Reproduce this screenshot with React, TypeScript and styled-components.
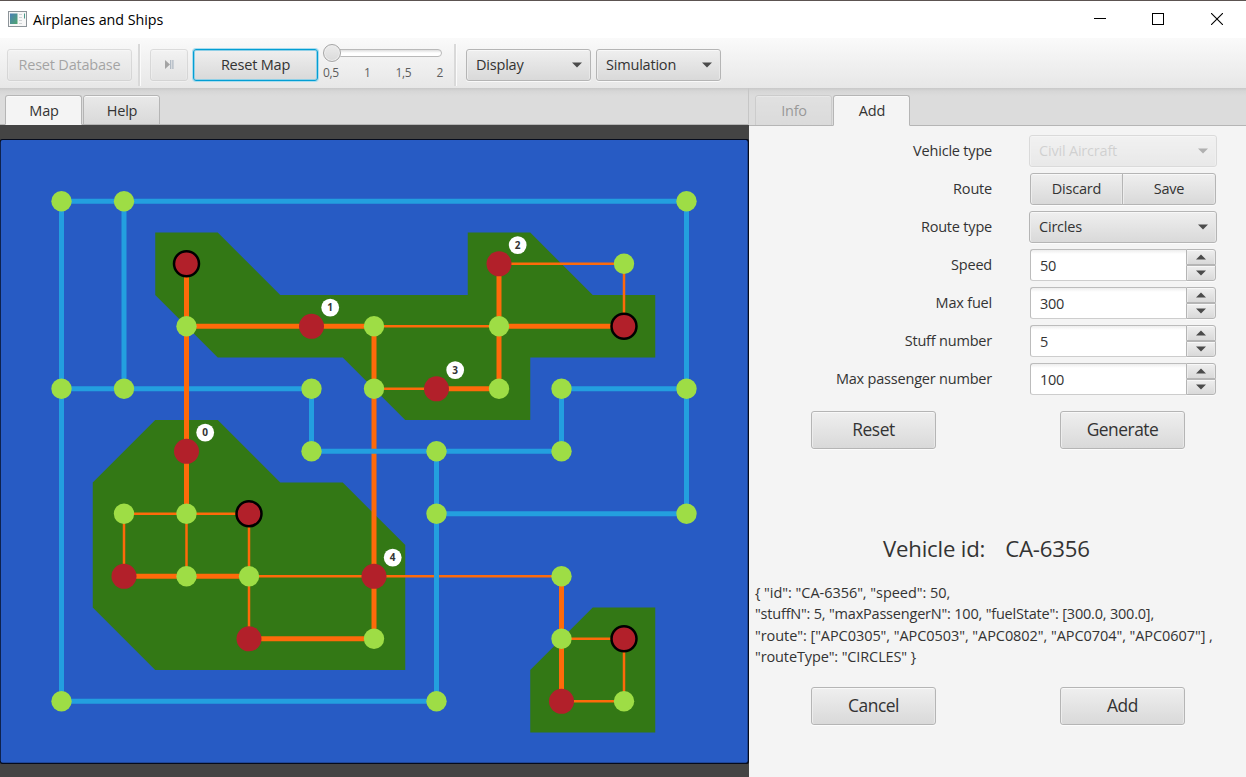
import React from "react";
import styled, { createGlobalStyle, css } from "styled-components";

const GlobalStyle = createGlobalStyle`
  * { box-sizing: border-box; }
  body { margin: 0; background: #f4f4f4; overflow: hidden; }
`;

const Window = styled.div`
  display: flex;
  flex-direction: column;
  width: 1246px;
  height: 777px;
  background: #f4f4f4;
  color: #333;
  font-family: "Open Sans", "Noto Sans", sans-serif;
  font-size: 14.5px;
  letter-spacing: -0.2px;
  white-space: pre;
`;

const TitleBar = styled.header`
  display: flex;
  align-items: center;
  height: 38px;
  flex: none;
  border-top: 1px solid #5c5451;
  background: #fff;
  color: #000;
  padding: 0 0 1px 8px;
`;

const Title = styled.span`
  margin-left: 6px;
  flex: 1;
  font-size: 14.3px;
  letter-spacing: -0.04px;
`;

const WindowButton = styled.span`
  display: flex;
  justify-content: center;
  align-items: center;
  width: 58.5px;
  height: 36px;
`;

const Toolbar = styled.div`
  display: flex;
  height: 50px;
  flex: none;
  padding: 11px 7px 7px;
  background: linear-gradient(#fafafa, #e7e7e7);
`;

const raised = css`
  border: 1px solid #b5b5b5;
  border-radius: 3px;
  background: linear-gradient(#efefef, #d9d9d9);
  box-shadow: inset 0 1px 0 #f8f8f8, inset 1px 0 0 #ededed, inset -1px 0 0 #e8e8e8, 0 1px 0 rgba(255, 255, 255, 0.7);
`;

const Button = styled.div<{ $w: number; $big?: boolean; $focus?: boolean; $off?: boolean; $mr?: number }>`
  ${raised}
  display: flex;
  align-items: center;
  justify-content: center;
  flex: none;
  width: ${(p) => p.$w}px;
  height: ${(p) => (p.$big ? 38 : 32)}px;
  margin-right: ${(p) => p.$mr || 0}px;
  padding-bottom: ${(p) => (p.$off ? 1 : 2)}px;
  ${(p) => p.$big && css`font-size: 17.4px; letter-spacing: -0.5px;`}
  ${(p) => p.$focus && css`
    border-color: #039ed3;
    box-shadow: 0 0 0 1px #a8dcee, inset 0 0 0 1px #8fcfe6;
  `}
  ${(p) => p.$off && css`opacity: 0.4;`}
`;

const Separator = styled.i<{ $l: number; $r: number }>`
  width: 3px;
  height: 42px;
  flex: none;
  margin: -5px ${(p) => p.$r}px 0 ${(p) => p.$l}px;
  border-left: 2px solid #d9d9d9;
  border-right: 1px solid #fbfbfb;
`;

const SpeedSlider = styled.div`
  width: 120px;
  margin: -6px 0 0 5px;
  flex: none;
`;

const Track = styled.div`
  display: flex;
  align-items: center;
  height: 8px;
  margin: 6px 0 0 2px;
  width: 117px;
  border: 1px solid #b9b9b9;
  border-radius: 4px;
  background: linear-gradient(#dedede, #fff 50%);
`;

const Thumb = styled.i`
  width: 18px;
  height: 18px;
  flex: none;
  margin-left: -3px;
  border: 1px solid #a5a5a5;
  border-radius: 50%;
  background: linear-gradient(#ececec, #dadada);
  box-shadow: inset 0 0 0 1px #eee, 0 1px 0 #f6f6f6;
`;

const Ticks = styled.div`
  display: flex;
  justify-content: space-between;
  margin-top: 7px;
  color: #5e5e5e;
  font-size: 12px;
  line-height: 17px;
  letter-spacing: -0.4px;
`;

const Select = styled.div<{ $w: number; $off?: boolean; $mr?: number }>`
  ${raised}
  display: flex;
  align-items: center;
  flex: none;
  justify-content: space-between;
  width: ${(p) => p.$w}px;
  height: 32px;
  margin-right: ${(p) => p.$mr || 0}px;
  padding: 0 8px 0 9px;
  span { padding-bottom: 2px; }
  ${(p) => p.$off && css`opacity: 0.4; span { opacity: 0.4; }`}
`;

const Body = styled.main`
  display: flex;
  flex: 1;
  min-height: 0;
`;

const Left = styled.section`
  display: flex;
  flex-direction: column;
  width: 749px;
  background: #444;
`;

const Right = styled.section`
  display: flex;
  flex-direction: column;
  flex: 1;
`;

const TabHeader = styled.nav<{ $h: number; $pl: number; $divider?: boolean }>`
  display: flex;
  align-items: flex-end;
  height: ${(p) => p.$h}px;
  flex: none;
  gap: 1px;
  padding-left: ${(p) => p.$pl}px;
  background: linear-gradient(#c8c8c8, #d6d6d6 3px, #dcdcdc 8px);
  box-shadow: inset 0 -1px 0 #b5b5b5;
  ${(p) => p.$divider && css`border-right: 1px solid #c6c6c6;`}
`;

const Tab = styled.div<{ $active?: boolean; $off?: boolean; $h: number }>`
  display: flex;
  align-items: center;
  justify-content: center;
  width: 77px;
  height: ${(p) => p.$h}px;
  padding-left: 1px;
  line-height: 29px;
  border: 1px solid #b5b5b5;
  border-bottom-color: ${(p) => (p.$active ? "#f4f4f4" : "#b5b5b5")};
  border-radius: 3px 3px 0 0;
  background: ${(p) => (p.$active ? "#f4f4f4" : "linear-gradient(#e9e9e9, #d9d9d9)")};
  box-shadow: inset 0 1px 0 #fafafa;
  ${(p) => p.$off && css`opacity: 0.4;`}
`;

const MapCanvas = styled.svg`
  display: block;
  flex: 1;
`;

const Form = styled.div`
  display: grid;
  grid-template-columns: 243px 188px;
  column-gap: 37px;
  row-gap: 6px;
  padding-top: 9px;
`;

const Label = styled.div`
  height: 32px;
  line-height: 31px;
  text-align: right;
`;

const Pair = styled.div`
  display: flex;
  margin-left: 1px;
  & > :first-child { border-radius: 3px 0 0 3px; margin-right: -1px; }
  & > :last-child { border-radius: 0 3px 3px 0; }
`;

const Spinner = styled.div`
  display: flex;
  height: 32px;
  width: 186px;
  margin-left: 1px;
`;

const Field = styled.div`
  flex: 1;
  border: 1px solid #bcbcbc;
  border-right: 0;
  border-bottom-color: #cdcdcd;
  border-radius: 3px 0 0 3px;
  background: linear-gradient(#ededed, #fff 4px);
  line-height: 31px;
  letter-spacing: -0.35px;
  padding-left: 9px;
`;

const Steppers = styled.div`
  display: flex;
  flex-direction: column;
  width: 30px;
`;

const Step = styled.div<{ $down?: boolean }>`
  ${raised}
  display: flex;
  align-items: center;
  justify-content: center;
  height: 16px;
  padding-right: 1px;
  border-radius: ${(p) => (p.$down ? "0 0 3px 0" : "0 3px 0 0")};
`;

const Actions = styled.div<{ $top: number }>`
  display: flex;
  gap: 124px;
  padding: ${(p) => p.$top}px 0 0 62px;
`;

const VehicleId = styled.h2`
  display: flex;
  gap: 20px;
  margin: 82px 0 0 134px;
  font-size: 22.2px;
  font-weight: 400;
  line-height: 36px;
  letter-spacing: -0.2px;
`;

const Details = styled.div`
  margin: 15px 0 0 6px;
  line-height: 21.3px;
  font-size: 14.5px;
`;

const Line = styled.div<{ $ls: number }>`
  letter-spacing: ${(p) => p.$ls}px;
`;

const Arrow = ({ up = false }: { up?: boolean }) => (
  <svg width="10" height="6" viewBox="0 0 10 6">
    <path d={up ? "M0 5.5 5 .5l5 5Z" : "M0 .5h10l-5 5Z"} fill="#4b4b4b" />
  </svg>
);

const gx = (c: number) => -1 + 62.5 * c;
const gy = (r: number) => 13.8 + 62.5 * r;

type Pt = [number, number];
type Seg = [number, number, number, number];

const islands: Pt[][] = [
  [[2.5, 1.5], [3.5, 1.5], [4.5, 2.5], [7.5, 2.5], [7.5, 1.5], [8.5, 1.5], [9.5, 2.5], [10.5, 2.5], [10.5, 3.5], [8.5, 3.5], [8.5, 4.5], [6.5, 4.5], [5.5, 3.5], [3.5, 3.5], [2.5, 2.5]],
  [[2.5, 4.5], [3.5, 4.5], [4.5, 5.5], [5.5, 5.5], [6.5, 6.5], [6.5, 8.5], [2.5, 8.5], [1.5, 7.5], [1.5, 5.5]],
  [[9.5, 7.5], [10.5, 7.5], [10.5, 9.5], [8.5, 9.5], [8.5, 8.5]],
];

const seaBelow: Seg[] = [
  [1, 1, 11, 1], [1, 1, 1, 9], [2, 1, 2, 4], [1, 4, 5, 4],
];
const seaAbove: Seg[] = [
  [5, 4, 5, 5], [5, 5, 9, 5], [9, 4, 9, 5], [9, 4, 11, 4], [11, 1, 11, 6],
  [7, 6, 11, 6], [7, 5, 7, 9], [1, 9, 7, 9],
];
const airWide: Seg[] = [
  [3, 2, 3, 6], [3, 3, 6, 3], [6, 3, 6, 8], [8, 2, 8, 4], [8, 3, 10, 3], [7, 4, 8, 4],
  [2, 7, 4, 7], [4, 8, 6, 8], [9, 7, 9, 9],
];
const airThin: Seg[] = [
  [6, 3, 8, 3], [8, 2, 10, 2], [10, 2, 10, 3], [6, 4, 7, 4], [2, 6, 4, 6], [2, 6, 2, 7],
  [3, 6, 3, 7], [4, 6, 4, 8], [4, 7, 9, 7], [9, 8, 10, 8], [10, 8, 10, 9], [9, 9, 10, 9],
];
const junctions: Pt[] = [
  [1, 1], [2, 1], [11, 1], [10, 2], [3, 3], [6, 3], [8, 3], [1, 4], [2, 4], [5, 4], [6, 4], [8, 4],
  [9, 4], [11, 4], [5, 5], [7, 5], [9, 5], [2, 6], [3, 6], [7, 6], [11, 6], [3, 7], [4, 7], [9, 7],
  [6, 8], [9, 8], [1, 9], [7, 9], [10, 9],
];
const airports: Pt[] = [[5, 3], [8, 2], [7, 4], [3, 5], [2, 7], [6, 7], [4, 8], [9, 9]];
const militaryAirports: Pt[] = [[3, 2], [10, 3], [4, 6], [10, 8]];
const stops: Pt[] = [[3, 5], [5, 3], [8, 2], [7, 4], [6, 7]];

const Segments = ({ items, color, width }: { items: Seg[]; color: string; width: number }) => (
  <g stroke={color} strokeWidth={width}>
    {items.map((s) => (
      <line key={s.join()} x1={gx(s[0])} y1={gy(s[1])} x2={gx(s[2])} y2={gy(s[3])} />
    ))}
  </g>
);

const RouteMap = () => (
  <MapCanvas width="749" height="652" viewBox="0 0 749 652">
    <rect x="0" y="14" width="749" height="625" rx="2" fill="#050b1c" />
    <rect x="0.7" y="15" width="747" height="622.7" rx="2" fill="#275bc4" />
    {islands.map((pts, i) => (
      <polygon key={i} fill="#337815" points={pts.map(([c, r]) => `${gx(c)},${gy(r)}`).join(" ")} />
    ))}
    <Segments items={seaBelow} color="#239fdf" width={5} />
    <Segments items={airThin} color="#fe6a0a" width={2.5} />
    <Segments items={airWide} color="#fe6a0a" width={5} />
    <Segments items={seaAbove} color="#239fdf" width={5} />
    {junctions.map(([c, r]) => (
      <circle key={`${c}-${r}`} cx={gx(c)} cy={gy(r)} r="10.2" fill="#9edd45" />
    ))}
    {airports.map(([c, r]) => (
      <circle key={`${c}-${r}`} cx={gx(c)} cy={gy(r)} r="12.5" fill="#b2202a" />
    ))}
    {militaryAirports.map(([c, r]) => (
      <circle key={`${c}-${r}`} cx={gx(c)} cy={gy(r)} r="12.5" fill="#b2202a" stroke="#000" strokeWidth="2.5" />
    ))}
    {stops.map(([c, r], i) => (
      <g key={i}>
        <circle cx={gx(c) + 18.7} cy={gy(r) - 18.7} r="8.9" fill="#fff" />
        <text x={gx(c) + 18.6} y={gy(r) - 15.1} textAnchor="middle" fontSize="10" fontWeight="700" letterSpacing="0" fill="#333">
          {i}
        </text>
      </g>
    ))}
  </MapCanvas>
);

const AppIcon = () => (
  <svg width="19" height="17" viewBox="0 0 19 17">
    <defs>
      <linearGradient id="screen" x1="0" y1="0" x2="1" y2="1">
        <stop offset="0" stopColor="#4a7fb8" />
        <stop offset="1" stopColor="#4fa66d" />
      </linearGradient>
    </defs>
    <rect x="0.5" y="0.5" width="18" height="15" fill="#f7f7f7" stroke="#8d9499" />
    <rect x="2" y="2.5" width="7.5" height="10.5" fill="url(#screen)" />
    <path d="M11 3.5h3M11 6.5h3M11 9.5h3M11 12.5h3" stroke="#cfd3d5" />
    <path d="M16.5 2.5v5" stroke="#4a9a8a" />
  </svg>
);

const spinners = [
  ["Speed", "50"],
  ["Max fuel", "300"],
  ["Stuff number", "5"],
  ["Max passenger number", "100"],
];

export default function App() {
  return (
    <Window>
      <GlobalStyle />
      <TitleBar>
        <AppIcon />
        <Title>Airplanes and Ships</Title>
        <WindowButton>
          <svg width="12" height="12"><path d="M0 5.5h12" stroke="#000" /></svg>
        </WindowButton>
        <WindowButton>
          <svg width="12" height="12"><rect x=".5" y=".5" width="11" height="11" fill="none" stroke="#000" /></svg>
        </WindowButton>
        <WindowButton>
          <svg width="12" height="12"><path d="m0 0 12 12M12 0 0 12" stroke="#000" strokeWidth="1.1" /></svg>
        </WindowButton>
      </TitleBar>
      <Toolbar>
        <Button $w={125} $off>Reset Database</Button>
        <Separator $l={6} $r={9} />
        <Button $w={38} $off $mr={5}>
          <svg width="9" height="9" viewBox="0 0 9 9">
            <path d="M0 0l5 4.5L0 9Z" fill="#333" />
            <path d="M5.7 0v9M7.9 0v9" stroke="#49617c" strokeWidth="1.2" />
          </svg>
        </Button>
        <Button $w={125} $focus>Reset Map</Button>
        <SpeedSlider>
          <Track><Thumb /></Track>
          <Ticks><span>0,5</span><span>1</span><span>1,5</span><span>2</span></Ticks>
        </SpeedSlider>
        <Separator $l={11} $r={9} />
        <Select $w={125} $mr={5}><span>Display</span><Arrow /></Select>
        <Select $w={125}><span>Simulation</span><Arrow /></Select>
      </Toolbar>
      <Body>
        <Left>
          <TabHeader $h={37} $pl={5} $divider>
            <Tab $h={30} $active>Map</Tab>
            <Tab $h={30}>Help</Tab>
          </TabHeader>
          <RouteMap />
        </Left>
        <Right>
          <TabHeader $h={38} $pl={6}>
            <Tab $h={31} $off>Info</Tab>
            <Tab $h={31} $active>Add</Tab>
          </TabHeader>
          <Form>
            <Label>Vehicle type</Label>
            <Select $w={188} $off><span>Civil Aircraft</span><Arrow /></Select>
            <Label>Route</Label>
            <Pair>
              <Button $w={93}>Discard</Button>
              <Button $w={94}>Save</Button>
            </Pair>
            <Label>Route type</Label>
            <Select $w={188}><span>Circles</span><Arrow /></Select>
            {spinners.map(([name, value]) => (
              <React.Fragment key={name}>
                <Label>{name}</Label>
                <Spinner>
                  <Field>{value}</Field>
                  <Steppers>
                    <Step><Arrow up /></Step>
                    <Step $down><Arrow /></Step>
                  </Steppers>
                </Spinner>
              </React.Fragment>
            ))}
          </Form>
          <Actions $top={16}>
            <Button $w={125} $big>Reset</Button>
            <Button $w={125} $big>Generate</Button>
          </Actions>
          <VehicleId><span>Vehicle id:</span><span>CA-6356</span></VehicleId>
          <Details>
            <Line $ls={-0.04}>{'{ "id": "CA-6356", "speed": 50,'}</Line>
            <Line $ls={-0.2}>{'"stuffN": 5, "maxPassengerN": 100, "fuelState": [300.0, 300.0],'}</Line>
            <Line $ls={-0.06}>{'"route": ["APC0305", "APC0503", "APC0802", "APC0704", "APC0607"] ,'}</Line>
            <Line $ls={-0.12}>{'"routeType": "CIRCLES" }'}</Line>
          </Details>
          <Actions $top={20}>
            <Button $w={125} $big>Cancel</Button>
            <Button $w={125} $big>Add</Button>
          </Actions>
        </Right>
      </Body>
    </Window>
  );
}
